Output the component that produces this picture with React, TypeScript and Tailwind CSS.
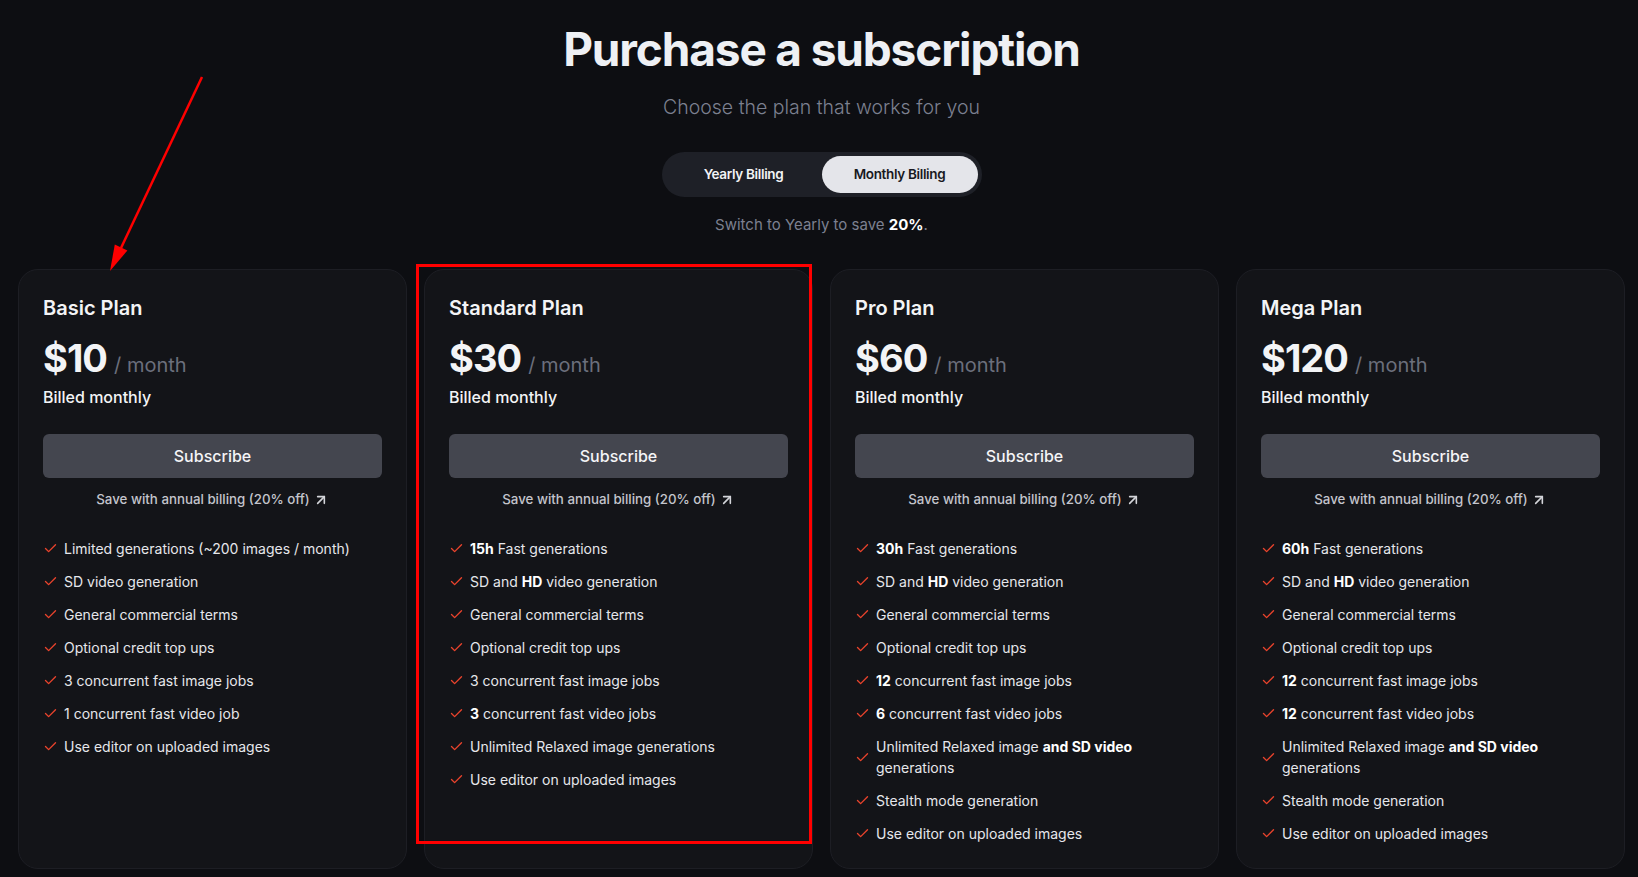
import React from "react";
import { Check, ArrowUpRight } from "lucide-react";

type Feature = React.ReactNode;

type Plan = {
  name: string;
  price: string;
  features: Feature[];
};

const B = ({ children }: { children: React.ReactNode }) => (
  <span className="font-bold text-white">{children}</span>
);

const plans: Plan[] = [
  {
    name: "Basic Plan",
    price: "$10",
    features: [
      "Limited generations (~200 images / month)",
      "SD video generation",
      "General commercial terms",
      "Optional credit top ups",
      "3 concurrent fast image jobs",
      "1 concurrent fast video job",
      "Use editor on uploaded images",
    ],
  },
  {
    name: "Standard Plan",
    price: "$30",
    features: [
      <>
        <B>15h</B> Fast generations
      </>,
      <>
        SD and <B>HD</B> video generation
      </>,
      "General commercial terms",
      "Optional credit top ups",
      "3 concurrent fast image jobs",
      <>
        <B>3</B> concurrent fast video jobs
      </>,
      "Unlimited Relaxed image generations",
      "Use editor on uploaded images",
    ],
  },
  {
    name: "Pro Plan",
    price: "$60",
    features: [
      <>
        <B>30h</B> Fast generations
      </>,
      <>
        SD and <B>HD</B> video generation
      </>,
      "General commercial terms",
      "Optional credit top ups",
      <>
        <B>12</B> concurrent fast image jobs
      </>,
      <>
        <B>6</B> concurrent fast video jobs
      </>,
      <>
        Unlimited Relaxed image <B>and SD video</B> generations
      </>,
      "Stealth mode generation",
      "Use editor on uploaded images",
    ],
  },
  {
    name: "Mega Plan",
    price: "$120",
    features: [
      <>
        <B>60h</B> Fast generations
      </>,
      <>
        SD and <B>HD</B> video generation
      </>,
      "General commercial terms",
      "Optional credit top ups",
      <>
        <B>12</B> concurrent fast image jobs
      </>,
      <>
        <B>12</B> concurrent fast video jobs
      </>,
      <>
        Unlimited Relaxed image <B>and SD video</B> generations
      </>,
      "Stealth mode generation",
      "Use editor on uploaded images",
    ],
  },
];

function PlanCard({ plan }: { plan: Plan }) {
  return (
    <div className="flex flex-col rounded-[20px] border border-[#1d1e24] bg-[#131418] px-6 pt-6 pb-6">
      <div className="text-[20px] leading-[28px] font-semibold text-[#f3f4f6]">{plan.name}</div>
      <div className="mt-[16px] flex items-baseline h-[40px]">
        <span className="text-[38px] leading-[40px] font-bold tracking-tight text-[#f3f4f6]">{plan.price}</span>
        <span className="ml-[7px] text-[20px] text-[#6b6f7c]">/ month</span>
      </div>
      <div className="mt-[7px] text-[16px] leading-[24px] font-medium text-[#f3f4f6]">Billed monthly</div>
      <button className="mt-[25px] h-[44px] w-full rounded-[6px] bg-[#44464f] text-[16px] font-medium text-[#f5f5f7]">
        Subscribe
      </button>
      <div className="mt-[12px] flex h-[20px] items-center justify-center text-[13.3px] font-medium text-[#c4c5cc]">
        <span>Save with annual billing (20% off)</span>
        <ArrowUpRight size={16} strokeWidth={2.4} className="ml-[3px] text-[#d4d5da]" />
      </div>
      <ul className="mt-[28px] flex flex-col gap-[12px]">
        {plan.features.map((f, i) => (
          <li key={i} className="flex items-center gap-[6px] text-[14px] leading-[21px] text-[#e6e7eb]">
            <Check size={15} strokeWidth={2.2} className="shrink-0 text-[#e8432c]" />
            <span>{f}</span>
          </li>
        ))}
      </ul>
    </div>
  );
}

export default function App() {
  return (
    <div className="relative min-h-screen overflow-hidden bg-[#0d0e12] pl-[18px] pr-[13px] pb-6 font-['Inter',sans-serif]">
      <div className="flex flex-col items-center pt-[26px]">
        <h1 className="text-[46px] leading-[47px] font-bold tracking-tight text-[#eef0f4]">Purchase a subscription</h1>
        <p className="mt-[20px] text-[19.5px] leading-[28px] font-light text-[#7c8090]">Choose the plan that works for you</p>
        <div className="mt-[31px] flex rounded-full bg-[#1e2027] p-[4px]">
          <button className="h-[37px] w-[156px] rounded-full text-[13.5px] font-semibold tracking-tight text-[#f3f4f6]">
            Yearly Billing
          </button>
          <button className="h-[37px] w-[156px] rounded-full bg-[#e4e5ea] text-[13.5px] font-semibold tracking-tight text-[#18191e]">
            Monthly Billing
          </button>
        </div>
        <p className="mt-[17px] text-[15px] leading-[22px] text-[#7c8090]">
          Switch to Yearly to save <span className="font-bold text-white">20%</span>.
        </p>
      </div>
      <div className="mt-[33px] grid grid-cols-4 gap-[17px]">
        {plans.map((p) => (
          <PlanCard key={p.name} plan={p} />
        ))}
      </div>

      {/* annotation overlays */}
      <div className="pointer-events-none absolute left-[416px] top-[264px] h-[580px] w-[396px] border-[3px] border-[#ff0000]" />
      <svg className="pointer-events-none absolute left-0 top-0" width="260" height="290" viewBox="0 0 260 290">
        <line x1="202" y1="77" x2="121" y2="248" stroke="#ff0000" strokeWidth="2.5" />
        <polygon points="110,271 127.4,250.5 114.8,244.5" fill="#ff0000" />
      </svg>
    </div>
  );
}
